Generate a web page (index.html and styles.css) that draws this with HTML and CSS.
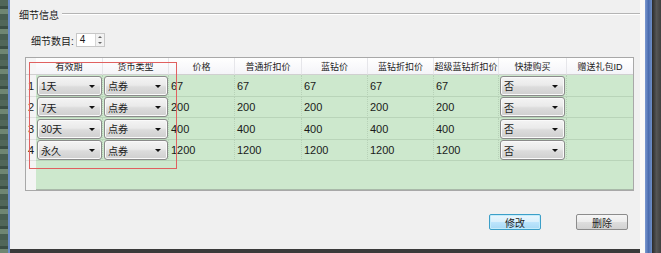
FILE: index.html
```html
<!DOCTYPE html>
<html>
<head>
<meta charset="utf-8">
<link rel="stylesheet" href="styles.css">
</head>
<body>
<div class="frame">
  <div class="edge-left"><div class="edge-dark"></div><div class="edge-blue"></div></div>
  <div class="content">
    <div class="group-head">
      <span class="group-title">细节信息</span>
      <span class="group-line"></span>
    </div>
    <div class="count-row">
      <span class="count-label">细节数目:</span>
      <span class="spin"><span class="spin-val">4</span><span class="spin-btns"><span class="spin-up"></span><span class="spin-down"></span></span></span>
    </div>
    <div class="table">
      <div class="hd corner"></div>
      <div class="hd">有效期</div>
      <div class="hd">货币类型</div>
      <div class="hd">价格</div>
      <div class="hd">普通折扣价</div>
      <div class="hd">蓝钻价</div>
      <div class="hd">蓝钻折扣价</div>
      <div class="hd">超级蓝钻折扣价</div>
      <div class="hd">快捷购买</div>
      <div class="hd last">赠送礼包ID</div>

      <div class="rn">1</div>
      <div class="cell c"><span class="combo">1天</span></div>
      <div class="cell c"><span class="combo">点券</span></div>
      <div class="cell">67</div><div class="cell">67</div><div class="cell">67</div><div class="cell">67</div><div class="cell">67</div>
      <div class="cell c"><span class="combo">否</span></div>
      <div class="cell last"></div>

      <div class="rn">2</div>
      <div class="cell c"><span class="combo">7天</span></div>
      <div class="cell c"><span class="combo">点券</span></div>
      <div class="cell">200</div><div class="cell">200</div><div class="cell">200</div><div class="cell">200</div><div class="cell">200</div>
      <div class="cell c"><span class="combo">否</span></div>
      <div class="cell last"></div>

      <div class="rn">3</div>
      <div class="cell c"><span class="combo">30天</span></div>
      <div class="cell c"><span class="combo">点券</span></div>
      <div class="cell">400</div><div class="cell">400</div><div class="cell">400</div><div class="cell">400</div><div class="cell">400</div>
      <div class="cell c"><span class="combo">否</span></div>
      <div class="cell last"></div>

      <div class="rn">4</div>
      <div class="cell c"><span class="combo">永久</span></div>
      <div class="cell c"><span class="combo">点券</span></div>
      <div class="cell">1200</div><div class="cell">1200</div><div class="cell">1200</div><div class="cell">1200</div><div class="cell">1200</div>
      <div class="cell c"><span class="combo">否</span></div>
      <div class="cell last"></div>

      <div class="rn fill-rn"></div>
      <div class="fill"></div>
    </div>
    <div class="buttons">
      <button class="btn default">修改</button>
      <button class="btn">删除</button>
    </div>
    <div class="annot"></div>
  </div>
  <div class="edge-right"><div class="edge-white"></div><div class="edge-rblue"></div><div class="edge-rdark"></div></div>
</div>
</body>
</html>
```

FILE: styles.css
```css
* { box-sizing: border-box; }
html, body { margin: 0; padding: 0; }
body {
  width: 661px;
  height: 253px;
  overflow: hidden;
  background: #f0f0f0;
  font-family: "Liberation Sans", "Noto Sans CJK SC", sans-serif;
  font-size: 11px;
  color: #1a1a1a;
}
.frame {
  display: flex;
  height: 253px;
}
.edge-left { display: flex; width: 10px; flex: none; }
.edge-dark {
  width: 8px;
  background: repeating-linear-gradient(180deg, #51675a 0 6px, #3a4e44 6px 9px, #6f8672 9px 14px, #485e50 14px 20px);
}
.edge-blue { width: 2px; background: #6a8cc6; }
.content {
  position: relative;
  flex: 1;
  background: #f0f0f0;
  border-bottom: 4px solid #3a3a3a;
}
.edge-right { display: flex; width: 21px; flex: none; }
.edge-white { width: 5px; background: #fbfbf6; }
.edge-rblue { width: 7px; background: linear-gradient(90deg, #7d9bd0, #4d6fae, #6f8fc8); }
.edge-rdark { width: 9px; background: linear-gradient(90deg, #2b2b2b, #555, #404040); }

.group-head {
  display: flex;
  align-items: center;
  height: 20px;
  margin-top: 4px;
  padding-left: 9px;
}
.group-title { font-size: 10px; }
.group-line {
  flex: 1;
  margin-left: 3px;
  height: 2px;
  border-top: 1px solid #b4b4b4;
  border-bottom: 1px solid #ffffff;
}
.count-row {
  display: flex;
  align-items: center;
  height: 14px;
  margin-top: 9px;
  padding-left: 21px;
  font-size: 10px;
}
.count-label { margin-right: 2px; }
.spin {
  display: flex;
  width: 29px;
  height: 14px;
  border: 1px solid #c7c7c7;
  background: #fff;
}
.spin-val { flex: 1; padding-left: 3px; line-height: 12px; font-size: 10px; }
.spin-btns {
  width: 9px;
  display: flex;
  flex-direction: column;
  border-left: 1px solid #d6d6d6;
  background: #f2f2f2;
}
.spin-up, .spin-down { flex: 1; position: relative; }
.spin-up::after, .spin-down::after {
  content: "";
  position: absolute;
  left: 2px;
  top: 2px;
  border-left: 2px solid transparent;
  border-right: 2px solid transparent;
}
.spin-up::after { border-bottom: 2px solid #666; }
.spin-down::after { border-top: 2px solid #666; }

.table {
  display: grid;
  grid-template-columns: 10px 67px 66px 66px 67px 66px 66px 65px 68px 66px;
  grid-template-rows: 17px 22px 21px 22px 21px 1fr;
  margin-top: 10px;
  margin-left: 15px;
  width: 609px;
  height: 134px;
  border: 1px solid #a8a8a8;
  background: #f6f6f6;
}
.hd {
  display: flex;
  align-items: center;
  justify-content: center;
  white-space: nowrap;
  background: linear-gradient(#ffffff, #f4f4f8);
  border-right: 1px solid #e6e6ea;
  border-bottom: 1px solid #d0d0d0;
  color: #222;
  font-size: 9px;
}
.hd.corner { background: #f6f6f6; border-right: none; }
.hd.last { border-right: none; }
.rn {
  display: flex;
  align-items: center;
  padding-left: 2px;
  background: #f4f4f4;
  border-bottom: 1px solid #e0e0e0;
}
.cell {
  display: flex;
  align-items: center;
  padding-left: 2px;
  background: #cde8cd;
  border-right: 1px dotted #b7d1b7;
  border-bottom: 1px solid #b9d4b9;
}
.cell.last { border-right: none; }
.cell.c { padding-left: 1px; }
.combo {
  position: relative;
  display: flex;
  align-items: center;
  width: 65px;
  height: 20px;
  padding-left: 3px;
  font-size: 10px;
  border: 1px solid #8a8a8a;
  border-radius: 3px;
  background: linear-gradient(#f4f4f4, #eaeaea 45%, #dcdcdc 55%, #cfcfcf);
  box-shadow: inset 0 0 0 1px #fafafa;
}
.combo::after {
  content: "";
  position: absolute;
  right: 6px;
  top: 8px;
  border-left: 3px solid transparent;
  border-right: 3px solid transparent;
  border-top: 3px solid #111;
}
.fill-rn { border-bottom: none; }
.fill {
  grid-column: 2 / 11;
  background: #cde8cd;
  border-bottom: 1px solid #a9b9a9;
}

.buttons {
  display: flex;
  justify-content: flex-end;
  gap: 35px;
  margin-top: 23px;
  padding-right: 12px;
}
.btn {
  width: 52px;
  height: 16px;
  padding: 0;
  font-family: "Liberation Sans", "Noto Sans CJK SC", sans-serif;
  font-size: 10px;
  color: #222;
  border: 1px solid #8c8c8c;
  border-radius: 2px;
  background: linear-gradient(#f6f6f6, #ececec 50%, #dedede 50%, #d2d2d2);
}
.btn.default {
  border-color: #3c9fc8;
  background: linear-gradient(#eaf6fd, #d9f0fc 50%, #bee6fd 50%, #a7d9f5);
  box-shadow: inset 0 0 0 1px #c4ecfb;
}
.annot {
  position: absolute;
  left: 19px;
  top: 62px;
  width: 148px;
  height: 107px;
  border: 1px solid #e06060;
  pointer-events: none;
}
```
